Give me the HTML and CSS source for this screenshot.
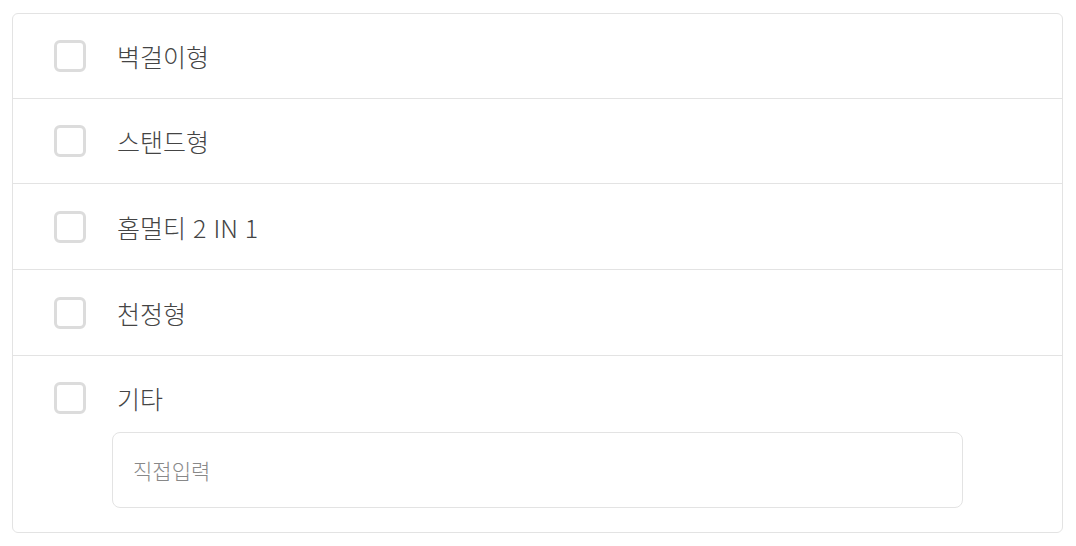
FILE: index.html
```html
<!DOCTYPE html>
<html lang="ko">
<head>
<meta charset="utf-8">
<link rel="stylesheet" href="styles.css">
</head>
<body>
<div class="list">
  <label class="row"><span class="box"></span><span class="label">벽걸이형</span></label>
  <label class="row"><span class="box"></span><span class="label">스탠드형</span></label>
  <label class="row tall"><span class="box"></span><span class="label">홈멀티 2 IN 1</span></label>
  <label class="row tall"><span class="box"></span><span class="label">천정형</span></label>
  <div class="row last">
    <label class="line"><span class="box"></span><span class="label">기타</span></label>
    <input class="field" type="text" placeholder="직접입력">
  </div>
</div>
</body>
</html>
```

FILE: styles.css
```css
html, body {
  margin: 0;
  padding: 0;
  background: #fff;
}
body {
  padding: 13px 13px 0 12px;
  font-family: "Noto Sans CJK KR", "Noto Sans", sans-serif;
}
.list {
  width: 1049px;
  border: 1px solid #e3e3e3;
  border-radius: 6px;
  display: flex;
  flex-direction: column;
}
.row {
  display: flex;
  align-items: center;
  height: 84px;
  padding-left: 41px;
  border-bottom: 1px solid #e3e3e3;
  box-sizing: content-box;
}
.row.tall {
  height: 85px;
}
.row.last {
  border-bottom: 0;
  height: auto;
  flex-direction: column;
  align-items: flex-start;
  padding-top: 26px;
  padding-bottom: 24px;
}
.line {
  display: flex;
  align-items: center;
}
.box {
  width: 26px;
  height: 26px;
  border: 3px solid #dcdcdc;
  border-radius: 6px;
  flex: none;
}
.label {
  margin-left: 31px;
  font-size: 25px;
  font-weight: 300;
  color: #444;
  line-height: 32px;
}
.field {
  margin-top: 18px;
  margin-left: 58px;
  width: 851px;
  height: 76px;
  box-sizing: border-box;
  border: 1px solid #e3e3e3;
  border-radius: 8px;
  padding: 0 20px;
  font-family: "Noto Sans CJK KR", "Noto Sans", sans-serif;
  font-size: 21px;
  font-weight: 300;
  color: #555;
  outline: none;
}
.field::placeholder {
  color: #888;
}
```
